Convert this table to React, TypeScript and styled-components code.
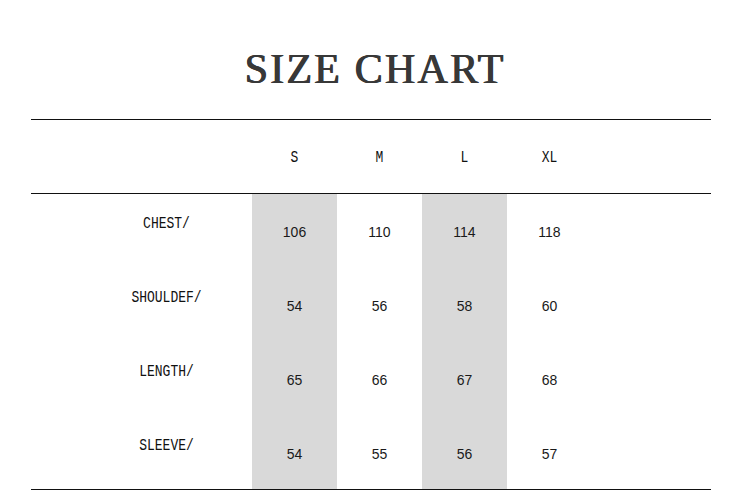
import React from 'react'
import styled, { createGlobalStyle } from 'styled-components'

const GlobalStyle = createGlobalStyle`
  html, body {
    margin: 0;
    padding: 0;
    background: #fff;
  }
`;

const Page = styled.div`
  width: 750px;
  height: 494px;
  padding-top: 48px;
  box-sizing: border-box;
  overflow: hidden;
`;

const Title = styled.h1`
  margin: 0 0 29px;
  text-align: center;
  font-family: "Liberation Serif", "Times New Roman", serif;
  font-weight: normal;
  font-size: 42px;
  line-height: 42px;
  letter-spacing: 2.2px;
  color: #383838;
  text-shadow: 0.7px 0 0 #383838, -0.3px 0 0 #383838;
`;

const Table = styled.div`
  margin: 0 39px 0 31px;
  display: grid;
  grid-template-columns: 221px 85px 85px 85px 85px 1fr;
`;

const HeaderRow = styled.div`
  display: contents;
`;

const HeaderCell = styled.div`
  height: 75px;
  border-top: 1px solid #111;
  border-bottom: 1px solid #111;
  display: flex;
  align-items: center;
  justify-content: center;
  padding-top: 2px;
  box-sizing: border-box;
`;

const BodyCell = styled.div<{ shaded?: boolean; last?: boolean }>`
  height: 74px;
  box-sizing: border-box;
  display: flex;
  align-items: center;
  justify-content: center;
  padding-top: 2px;
  background: ${(p) => (p.shaded ? '#d9d9d9' : 'transparent')};
  border-bottom: ${(p) => (p.last ? '1px solid #111' : 'none')};
`;

const LabelCell = styled(BodyCell)`
  align-items: flex-start;
  padding-top: 23px;
  padding-left: 50px;
`;

const TallText = styled.span`
  display: inline-block;
  font-family: "Liberation Mono", "Courier New", monospace;
  font-size: 13px;
  line-height: 14px;
  color: #111;
  transform: scaleY(1.28);
`;

const Num = styled.span`
  font-family: "Liberation Sans", Arial, sans-serif;
  font-size: 14px;
  color: #1a1a1a;
`;

const sizes = ['S', 'M', 'L', 'XL'];

const rows = [
  { label: 'CHEST/', values: ['106', '110', '114', '118'] },
  { label: 'SHOULDEF/', values: ['54', '56', '58', '60'] },
  { label: 'LENGTH/', values: ['65', '66', '67', '68'] },
  { label: 'SLEEVE/', values: ['54', '55', '56', '57'] },
];

const App: React.FC = () => {
  return (
    <>
      <GlobalStyle />
      <Page>
        <Title>SIZE CHART</Title>
        <Table>
          <HeaderRow>
            <HeaderCell />
            {sizes.map((s) => (
              <HeaderCell key={s}>
                <TallText>{s}</TallText>
              </HeaderCell>
            ))}
            <HeaderCell />
          </HeaderRow>
          {rows.map((row, i) => {
            const last = i === rows.length - 1;
            return (
              <React.Fragment key={row.label}>
                <LabelCell last={last}>
                  <TallText>{row.label}</TallText>
                </LabelCell>
                {row.values.map((v, j) => (
                  <BodyCell key={j} shaded={j % 2 === 0} last={last}>
                    <Num>{v}</Num>
                  </BodyCell>
                ))}
                <BodyCell last={last} />
              </React.Fragment>
            );
          })}
        </Table>
      </Page>
    </>
  );
};

export default App;
